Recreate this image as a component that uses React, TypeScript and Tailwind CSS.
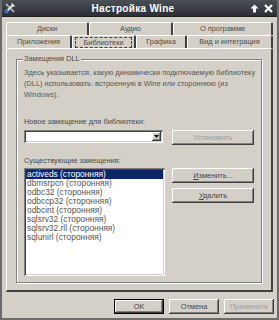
import React from "react";

const raised =
  "shadow-[inset_-1px_-1px_#404040,inset_1px_1px_#ffffff,inset_-2px_-2px_#808080,inset_2px_2px_#d4d0c8]";
const sunken =
  "shadow-[inset_1px_1px_#808080,inset_-1px_-1px_#ffffff,inset_2px_2px_#404040,inset_-2px_-2px_#d4d0c8]";

const items = [
  "activeds (сторонняя)",
  "dbmsrpcn (сторонняя)",
  "odbc32 (сторонняя)",
  "odbccp32 (сторонняя)",
  "odbcint (сторонняя)",
  "sqlsrv32 (сторонняя)",
  "sqlsrv32.rll (сторонняя)",
  "sqlunirl (сторонняя)",
];

function Tab({ label, w, active }: { label: string; w: string; active?: boolean }) {
  return (
    <div
      className={`${w} h-[13px] flex items-center justify-center border-t border-l border-white border-r-2 border-r-[#404040] rounded-t-[2px] ${
        active ? "bg-[#d4d0c8]" : ""
      }`}
    >
      <span className={active ? "outline outline-1 outline-dashed outline-[#444] px-[7px] leading-[9px]" : ""}>
        {label}
      </span>
    </div>
  );
}

function Btn({ label, disabled, u, w = "w-[82px]" }: { label: string; disabled?: boolean; u?: boolean; w?: string }) {
  return (
    <div className={`${w} h-[15px] flex items-center justify-center ${raised} ${disabled ? "text-[#a09c94]" : "text-[#444]"}`}>
      {u ? (
        <span>
          <span className="underline">{label[0]}</span>
          {label.slice(1)}
        </span>
      ) : (
        label
      )}
    </div>
  );
}

export default function App() {
  return (
    <div
      className="w-[279px] h-[320px] bg-[#d4d0c8] flex flex-col text-[7.4px] text-[#4a4a4a] border-l-2 border-r-2 border-b-2 border-[#6b6b6b] overflow-hidden"
      style={{ fontFamily: '"Liberation Sans", Arial, sans-serif' }}
    >
      {/* title bar */}
      <div className="h-[17px] -mx-[2px] bg-gradient-to-b from-[#4a4f55] to-[#2c3036] flex items-center px-[4px] text-white border-b border-[#1c1f22]">
        <svg width="12" height="12" viewBox="0 0 12 12">
          <path d="M2 10 L9 3" stroke="#e8e8e8" strokeWidth="2" />
          <path d="M8 1 L11 4 L10 5 L7 2 Z" fill="#e8e8e8" />
          <path d="M2 2 L10 10" stroke="#cfcfcf" strokeWidth="1.5" />
          <circle cx="2.5" cy="9.5" r="2" fill="#3a6fd0" />
        </svg>
        <div className="flex-1 text-center font-bold text-[10px] tracking-[0.3px]">Настройка Wine</div>
        <svg width="9" height="9" viewBox="0 0 9 9" className="mr-[5px]">
          <path d="M4.5 0.5 L8.5 4.5 L6 4.5 L6 8.5 L3 8.5 L3 4.5 L0.5 4.5 Z" fill="#fff" />
        </svg>
        <svg width="9" height="9" viewBox="0 0 9 9" className="mr-[2px]">
          <path d="M1 1 L8 8 M8 1 L1 8" stroke="#fff" strokeWidth="2.2" />
        </svg>
      </div>

      {/* tabs */}
      <div className="px-[4px] pt-[5px] flex flex-col">
        <div className="flex">
          <Tab label="Диски" w="w-[83px]" />
          <Tab label="Аудио" w="w-[84px]" />
          <Tab label="О программе" w="w-[100px]" />
        </div>
        <div className="flex">
          <Tab label="Приложения" w="w-[66px]" />
          <Tab label="Библиотеки" w="w-[64px]" active />
          <Tab label="Графика" w="w-[51px]" />
          <Tab label="Вид и интеграция" w="w-[86px]" />
        </div>

        {/* panel */}
        <div className="h-[244px] border-t border-l border-white border-r-2 border-b-2 border-r-[#404040] border-b-[#404040] px-[9px] pt-[10px] pb-[7px] flex">
          <div className="relative flex-1 border border-[#808080] shadow-[1px_1px_#ffffff,inset_1px_1px_#ffffff] px-[7px] pt-[7px] pb-[6px] flex flex-col">
            <span className="absolute -top-[6px] left-[6px] bg-[#d4d0c8] px-[1px] leading-[10px]">Замещения DLL</span>
            <p className="leading-[11px] text-[#555] -mr-[5px]">
              Здесь указывается, какую динамически подключаемую библиотеку (DLL) использовать: встроенную в Wine или стороннюю (из Windows).
            </p>
            <div className="mt-[17px] leading-[10px]">Новое замещение для библиотеки:</div>
            <div className="mt-[3px] flex justify-between items-start">
              <div className={`w-[139px] h-[13px] bg-white ${sunken} flex justify-end p-[2px]`}>
                <div className={`w-[9px] h-[9px] bg-[#d4d0c8] ${raised} flex items-center justify-center`}>
                  <svg width="5" height="3" viewBox="0 0 5 3">
                    <path d="M0 0 L5 0 L2.5 3 Z" fill="#000" />
                  </svg>
                </div>
              </div>
              <Btn label="Установить" disabled />
            </div>
            <div className="mt-[11px] leading-[10px]">Существующие замещения:</div>
            <div className="mt-[2px] flex justify-between items-start flex-1">
              <div className={`w-[141px] h-full bg-white ${sunken} p-[2px] flex flex-col`}>
                {items.map((t, i) => (
                  <div
                    key={t}
                    className={`h-[9px] leading-[9px] px-[1px] text-[8.4px] ${i === 0 ? "bg-[#0a246a] text-white" : "text-[#555]"}`}
                  >
                    {t}
                  </div>
                ))}
              </div>
              <div className="flex flex-col gap-[5px]">
                <Btn label="Изменить..." u />
                <Btn label="Удалить" u />
              </div>
            </div>
          </div>
        </div>
      </div>

      {/* bottom buttons */}
      <div className="flex justify-end gap-[5px] pr-[3px] pt-[7px]">
        <div className={`w-[50px] h-[15px] flex items-center justify-center border border-black text-[#444] ${raised}`}>OK</div>
        <Btn label="Отмена" w="w-[50px]" />
        <Btn label="Применить" w="w-[50px]" disabled />
      </div>
    </div>
  );
}
